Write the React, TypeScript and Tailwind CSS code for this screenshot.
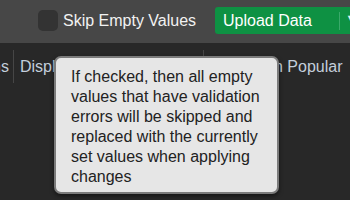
const TOOLTIP_TEXT =
  'If checked, then all empty values that have validation errors will be skipped and replaced with the currently set values when applying changes';

const Toolbar = () => (
  <div className="h-[43px] bg-[#474747] flex items-center pb-[2px] pl-[38px] shrink-0">
    <label className="w-[177px] shrink-0 flex items-center gap-[5px]">
      <span className="w-[20px] h-[21px] rounded-[5px] bg-[#333333] shrink-0"></span>
      <span className="text-[16px] text-[#f2f2f2] whitespace-nowrap">Skip Empty Values</span>
    </label>
    <div className="h-[27px] w-[150px] shrink-0 bg-[#0e9143] rounded-[3px] flex items-center">
      <span className="w-[124px] shrink-0 pl-[8px] text-[16px] text-white whitespace-nowrap">Upload Data</span>
      <span className="w-px h-[18px] shrink-0 bg-[#3aa96a]"></span>
      <span className="pl-[6px] shrink-0 text-[9px] text-[#e6f5ec] -mt-[3px]">▼</span>
    </div>
  </div>
);

const OptionsRow = () => (
  <div className="flex items-center h-[33px] mt-[7px] text-[16px] text-[#c3cedb] whitespace-nowrap">
    <div className="w-[9px] overflow-hidden flex justify-end shrink-0">
      <span>Columns</span>
    </div>
    <span className="ml-[4px] w-px h-[33px] bg-[#464646] shrink-0"></span>
    <span className="pl-[6px] w-[189px] shrink-0">Display Options</span>
    <span className="w-px h-[33px] bg-[#464646] shrink-0"></span>
    <span className="pl-[14px]">Common Popular</span>
  </div>
);

export default function App() {
  return (
    <div
      className="relative w-[350px] h-[200px] overflow-hidden bg-[#282828] flex flex-col"
      style={{ fontFamily: '"Liberation Sans", Arial, sans-serif' }}
    >
      <Toolbar />
      <OptionsRow />
      <div className="absolute left-[54px] top-[56px] w-[225px] h-[138px] rounded-[7px] border-2 border-[#7b7b7b] bg-[#e6e6e6] shadow-[0_2px_4px_rgba(0,0,0,0.5)] pl-[15px] pr-[12px] pt-[9px] text-[16px] leading-[20px] text-[#222222]">
        {TOOLTIP_TEXT}
      </div>
    </div>
  );
}
